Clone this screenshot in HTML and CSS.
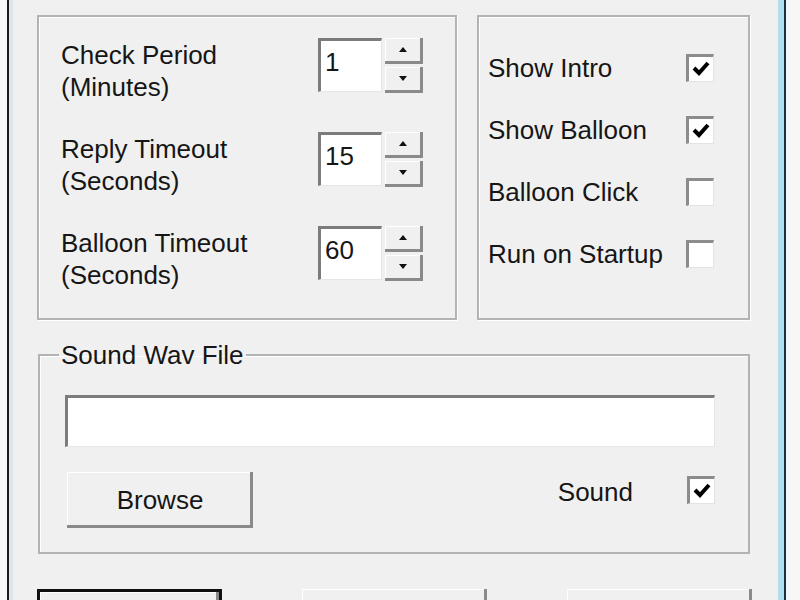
FILE: index.html
```html
<!DOCTYPE html>
<html lang="en">
<head>
    <meta charset="UTF-8">
    <meta name="viewport" content="width=device-width, initial-scale=1.0">
    <title>Options</title>
    <link rel="stylesheet" href="styles.css">
</head>
<body>
    <div class="window">
        <div class="top-row">
            <!-- Timing settings -->
            <div class="group timing">
                <div class="spin-row">
                    <label class="spin-label">Check Period<br>(Minutes)</label>
                    <div class="spin">
                        <input type="text" class="spin-value" value="1">
                        <div class="spin-buttons">
                            <button class="spin-btn"><svg width="8" height="5" viewBox="0 0 8 5"><path d="M4 0 L8 5 L0 5 Z" fill="#111"/></svg></button>
                            <button class="spin-btn"><svg width="8" height="5" viewBox="0 0 8 5"><path d="M0 0 L8 0 L4 5 Z" fill="#111"/></svg></button>
                        </div>
                    </div>
                </div>
                <div class="spin-row">
                    <label class="spin-label">Reply Timeout<br>(Seconds)</label>
                    <div class="spin">
                        <input type="text" class="spin-value" value="15">
                        <div class="spin-buttons">
                            <button class="spin-btn"><svg width="8" height="5" viewBox="0 0 8 5"><path d="M4 0 L8 5 L0 5 Z" fill="#111"/></svg></button>
                            <button class="spin-btn"><svg width="8" height="5" viewBox="0 0 8 5"><path d="M0 0 L8 0 L4 5 Z" fill="#111"/></svg></button>
                        </div>
                    </div>
                </div>
                <div class="spin-row">
                    <label class="spin-label">Balloon Timeout<br>(Seconds)</label>
                    <div class="spin">
                        <input type="text" class="spin-value" value="60">
                        <div class="spin-buttons">
                            <button class="spin-btn"><svg width="8" height="5" viewBox="0 0 8 5"><path d="M4 0 L8 5 L0 5 Z" fill="#111"/></svg></button>
                            <button class="spin-btn"><svg width="8" height="5" viewBox="0 0 8 5"><path d="M0 0 L8 0 L4 5 Z" fill="#111"/></svg></button>
                        </div>
                    </div>
                </div>
            </div>

            <!-- Check options -->
            <div class="group options">
                <div class="check-row">
                    <span>Show Intro</span>
                    <span class="checkbox"><svg width="20" height="18" viewBox="0 0 20 18"><path d="M3 8 L8 13 L17 3" fill="none" stroke="#000" stroke-width="4"/></svg></span>
                </div>
                <div class="check-row">
                    <span>Show Balloon</span>
                    <span class="checkbox"><svg width="20" height="18" viewBox="0 0 20 18"><path d="M3 8 L8 13 L17 3" fill="none" stroke="#000" stroke-width="4"/></svg></span>
                </div>
                <div class="check-row">
                    <span>Balloon Click</span>
                    <span class="checkbox"></span>
                </div>
                <div class="check-row">
                    <span>Run on Startup</span>
                    <span class="checkbox"></span>
                </div>
            </div>
        </div>

        <fieldset class="sound-group">
            <legend>Sound Wav File</legend>
            <input type="text" class="file-input">
            <div class="sound-row">
                <button class="btn browse">Browse</button>
                <span class="sound-label">Sound</span>
                <span class="checkbox sound-check"><svg width="20" height="18" viewBox="0 0 20 18"><path d="M3 8 L8 13 L17 3" fill="none" stroke="#000" stroke-width="4"/></svg></span>
            </div>
        </fieldset>

        <!-- bottom buttons, labels fall below the visible area -->
        <div class="actions">
            <button class="btn default" aria-label="OK"></button>
            <button class="btn" aria-label="Cancel"></button>
            <button class="btn" aria-label="Apply"></button>
        </div>
    </div>
</body>
</html>
```

FILE: styles.css
```css
body {
    margin: 0;
    background-color: #f7f7f7;
    font-family: "Liberation Sans", Arial, sans-serif;
    font-size: 26px;
    color: #161616;
    overflow: hidden;
}
.window {
    margin-left: 7px;
    width: 779px;
    min-height: 600px;
    box-sizing: border-box;
    background-color: #f0f0f0;
    border-left: 2px solid #1b1b1b;
    border-right: 2px solid #1d2f3c;
    box-shadow: inset 4px 0 #e0e5e9, inset -6px 0 #b3def0;
    padding: 15px 0 0 28px;
}
.top-row {
    display: flex;
    gap: 20px;
}
.group {
    height: 305px;
    box-sizing: border-box;
    border: 2px solid #b3b3b3;
    box-shadow: inset 1px 1px #fff, 1px 1px #fff;
}
.timing {
    width: 420px;
    padding: 22px 32px 0 22px;
    display: flex;
    flex-direction: column;
    gap: 30px;
}
.spin-row {
    display: flex;
    justify-content: space-between;
    align-items: flex-start;
}
.spin-label {
    line-height: 32px;
}
.spin {
    display: flex;
    gap: 3px;
    margin-top: -1px;
}
.spin-value {
    width: 64px;
    height: 54px;
    box-sizing: border-box;
    margin: 0;
    padding: 0 4px 8px;
    font: inherit;
    color: #161616;
    background-color: #fff;
    border-top: 3px solid #7c7c7c;
    border-left: 3px solid #7c7c7c;
    border-right: 1px solid #e6e6e6;
    border-bottom: 1px solid #e6e6e6;
    outline: none;
}
.spin-buttons {
    display: flex;
    flex-direction: column;
    justify-content: space-between;
    height: 55px;
}
.spin-btn {
    width: 38px;
    height: 26px;
    padding: 0;
    display: flex;
    align-items: center;
    justify-content: center;
    background-color: #f0f0f0;
    border: none;
    border-right: 3px solid #8a8a8a;
    border-bottom: 3px solid #8a8a8a;
    box-shadow: inset 1px 1px #fff;
}
.options {
    width: 273px;
    padding: 35px 0 0 9px;
    display: flex;
    flex-direction: column;
    gap: 30px;
}
.check-row {
    display: grid;
    grid-template-columns: 198px 28px;
    align-items: center;
    height: 32px;
    line-height: 32px;
}
.checkbox {
    width: 28px;
    height: 28px;
    box-sizing: border-box;
    display: flex;
    align-items: center;
    justify-content: center;
    background-color: #fff;
    border-top: 3px solid #8c8c8c;
    border-left: 3px solid #8c8c8c;
    border-right: 1px solid #e3e3e3;
    border-bottom: 1px solid #e3e3e3;
}
.sound-group {
    width: 712px;
    box-sizing: border-box;
    margin: 19px 0 0 1px;
    padding: 24px 33px 24px 25px;
    min-inline-size: 0;
    border: 2px solid #b3b3b3;
    box-shadow: inset 1px 1px #fff;
}
.sound-group legend {
    margin-left: -6px;
    padding: 0 2px;
    line-height: 32px;
}
.file-input {
    display: block;
    width: 650px;
    height: 52px;
    box-sizing: border-box;
    margin: 0;
    background-color: #fff;
    border-top: 3px solid #7c7c7c;
    border-left: 3px solid #7c7c7c;
    border-right: 1px solid #e6e6e6;
    border-bottom: 1px solid #e6e6e6;
    outline: none;
}
.sound-row {
    display: flex;
    align-items: flex-start;
    margin-top: 25px;
}
.btn {
    width: 185px;
    height: 56px;
    padding: 0;
    font: inherit;
    color: #161616;
    background-color: #f0f0f0;
    border: none;
    box-shadow: inset -3px -3px #8a8a8a, inset 1px 1px #fff;
}
.browse {
    width: 186px;
    margin-left: 2px;
}
.sound-label {
    margin-left: auto;
    margin-top: 4px;
    line-height: 32px;
}
.sound-check {
    margin: 4px 0 0 54px;
}
.actions {
    display: flex;
    justify-content: space-between;
    width: 715px;
    margin-top: 35px;
}
.default {
    border: 3px solid #111;
}
```
